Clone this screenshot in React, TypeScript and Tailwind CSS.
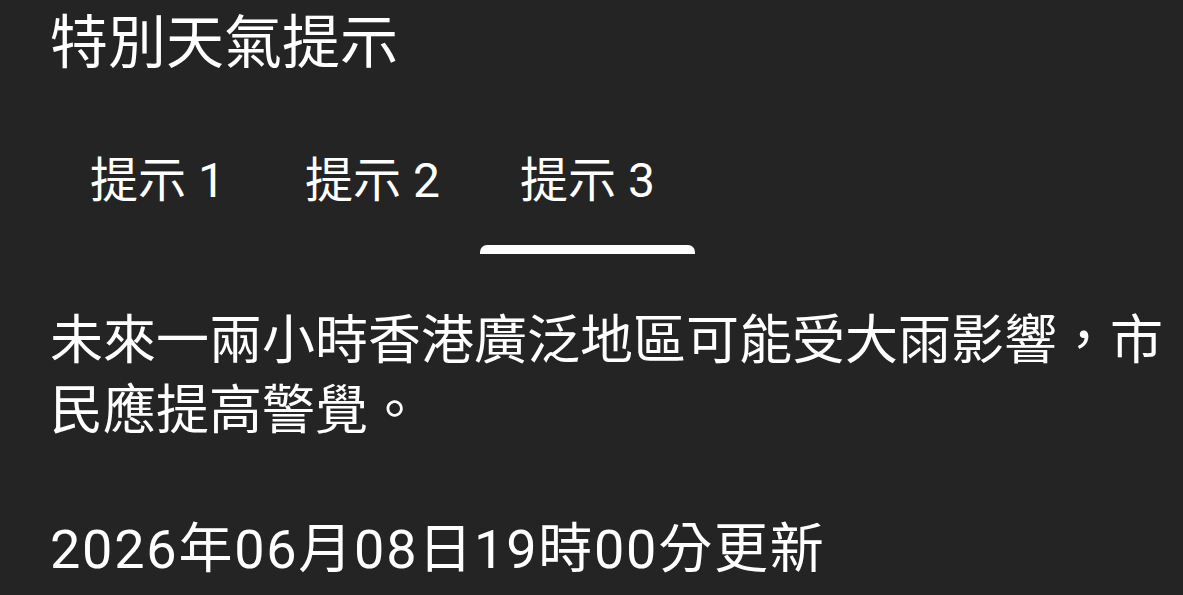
const tabs = ["提示 1", "提示 2", "提示 3"];

export default function App() {
  const active = 2;
  return (
    <div
      className="w-[1183px] h-[595px] overflow-hidden bg-[#242424] text-white pl-[50px] pr-[14px]"
      style={{ fontFamily: 'Roboto, "Noto Sans CJK TC", sans-serif' }}
    >
      <h1 className="pt-[14px] text-[58px] leading-[58px] font-normal">特別天氣提示</h1>

      <div className="mt-[85px] flex">
        {tabs.map((t, i) => (
          <div key={t} className="w-[215px] flex flex-col items-center">
            <span className="text-[48px] leading-[48px]">{t}</span>
            <div
              className={`mt-[40px] h-[9px] w-full rounded-t-[7px] ${
                i === active ? "bg-white" : "bg-transparent"
              }`}
            />
          </div>
        ))}
      </div>

      <p className="mt-[52px] text-[53px] leading-[70px]">
        未來一兩小時香港廣泛地區可能受大雨影響，市民應提高警覺。
      </p>

      <p className="mt-[77px] text-[54px] leading-[54px] tracking-[1.75px]">
        2026年06月08日19時00分更新
      </p>
    </div>
  );
}
